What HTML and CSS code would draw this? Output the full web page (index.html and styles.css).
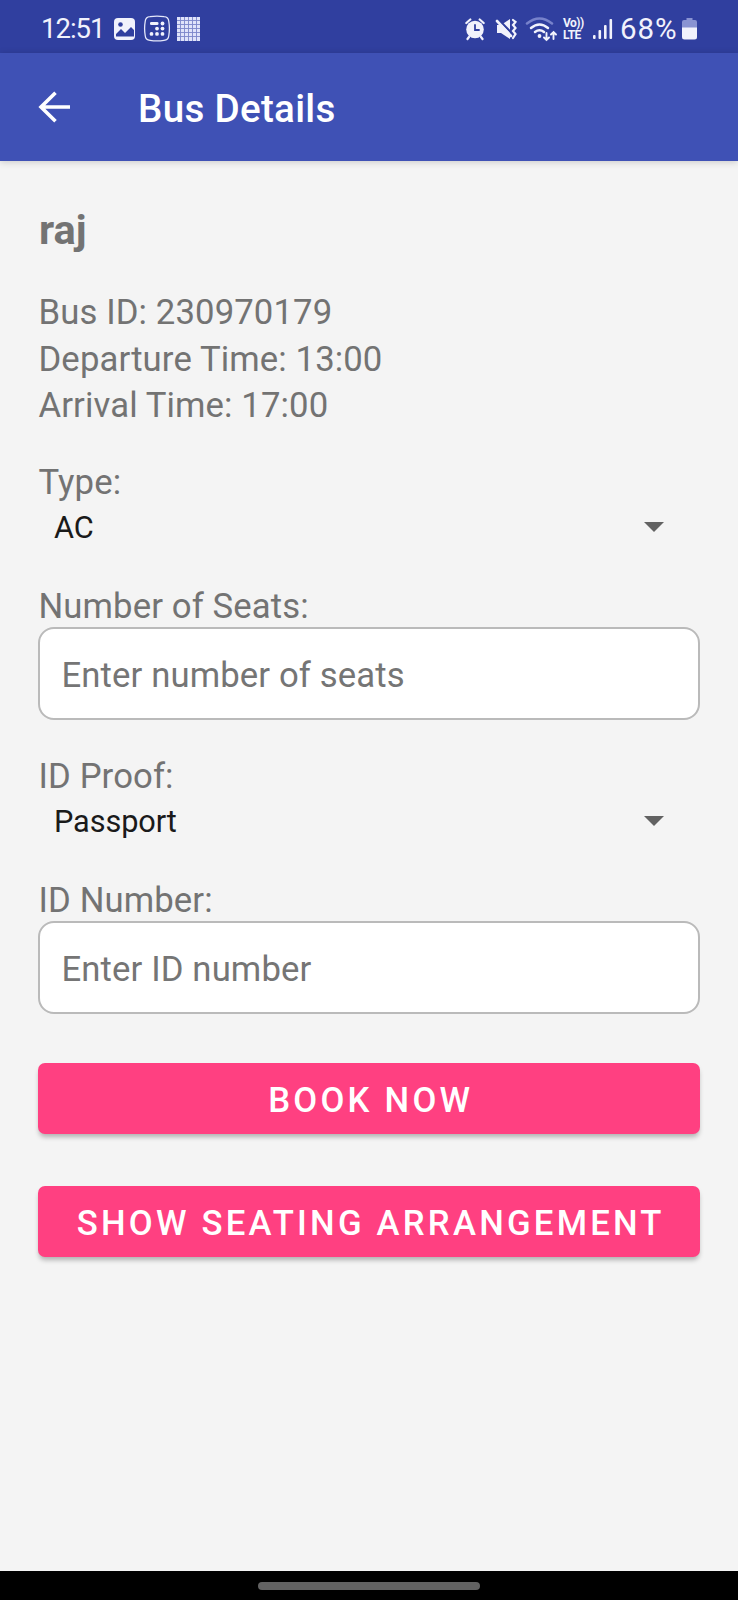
FILE: index.html
```html
<!DOCTYPE html>
<html lang="en">
<head>
<meta charset="utf-8">
<title>Bus Details</title>
<link rel="stylesheet" href="styles.css">
</head>
<body>
<div class="screen">
  <div class="status">
    <span class="clock">12:51</span>
    <svg class="notif" width="88" height="28" viewBox="0 0 88 28" fill="none">
      <rect x="1" y="3" width="21" height="22" rx="4" fill="#f1f2fc"/>
      <circle cx="7.500" cy="9.500" r="2.300" fill="#303f9f"/>
      <path d="M3 21.500V19l5-5 4 4 6-6 3 3v6.500z" fill="#303f9f"/>
      <path d="M37 1.700q7-1.200 14 0 4.500.3 4.800 4.800 1.200 7 0 14-.3 4.500-4.800 4.800-7 1.200-14 0-4.500-.3-4.800-4.800-1.200-7 0-14 .3-4.500 4.800-4.800z" stroke="#e4e7fa" stroke-width="1.300"/>
      <g fill="#f1f2fc"><rect x="37" y="7" width="8.500" height="3" rx="1.300"/><circle cx="49.500" cy="8.500" r="1.900"/><circle cx="44" cy="13.600" r="1.900"/><circle cx="49.500" cy="13.600" r="1.900"/><circle cx="38.500" cy="18.900" r="1.900"/><circle cx="44" cy="18.900" r="1.900"/><circle cx="49.500" cy="18.900" r="1.900"/></g>
      <rect x="64" y="2" width="23" height="24" fill="#dfe3fa"/>
      <path d="M67.500 2v24M71.500 2v24M75.500 2v24M79.500 2v24M83.500 2v24M64 5.500h23M64 9.500h23M64 13.500h23M64 17.500h23M64 21.500h23" stroke="#7a86c9" stroke-width=".9"/>
    </svg>
    <span class="spacer"></span>
    <svg class="sys" width="92" height="28" viewBox="0 0 92 28" fill="none" stroke="#f1f2fc" stroke-linecap="round">
      <circle cx="10" cy="14.500" r="8.800" fill="#f1f2fc" stroke="none"/>
      <path d="M1.300 8l4-3.500M18.700 8l-4-3.500M4 22l-1.500 2M16 22l1.500 2" stroke-width="2.200"/>
      <path d="M10 10v5h4" stroke="#303f9f" stroke-width="1.800"/>
      <path d="M32 10h4l9-6v20l-9-6h-4z" fill="#f1f2fc" stroke="none"/>
      <path d="M33.500 4.500l13.500 14" stroke="#303f9f" stroke-width="2.200"/>
      <path d="M32 6l14 15" stroke-width="2.600"/>
      <path d="M48 5l2.500 2-2.500 3 2.500 3-2.500 3 2.500 3-2.500 4" stroke-width="2.200"/>
      <path d="M62 8.500q12.500-10 25 0" stroke="#7782cb" stroke-width="2.500"/>
      <path d="M66 13q8.500-7 17 0M70 17q4.500-3.500 9 0" stroke-width="2.500"/>
      <circle cx="74.500" cy="21" r="1.900" fill="#f1f2fc" stroke="none"/>
      <path d="M81.500 18v7m-2.500-2.500 2.500 2.500 2.500-2.500M88.500 24v-7m-2.500 2.500 2.500-2.500 2.500 2.500" stroke-width="1.900"/>
    </svg>
    <span class="volte"><span>Vo))</span><span>LTE</span></span>
    <svg class="signal" width="20" height="22" viewBox="0 0 20 22" fill="#f1f2fc"><rect x="0" y="17" width="2.600" height="4" rx="1"/><rect x="5.500" y="12" width="2.600" height="9" rx="1"/><rect x="11" y="7" width="2.600" height="14" rx="1"/><rect x="16.500" y="1" width="2.600" height="20" rx="1"/></svg>
    <span class="percent">68%</span>
    <svg class="battery" width="15" height="22" viewBox="0 0 15 22"><path d="M4.500 0h6v2H13q2 0 2 2v6H0V4q0-2 2-2h2.500z" fill="#8993d2"/><path d="M0 9.500h15V19q0 2.500-2.500 2.500h-10Q0 21.500 0 19z" fill="#f1f2fc"/></svg>
  </div>
  <header class="appbar">
    <svg class="back" width="32" height="32" viewBox="0 0 32 32" fill="none" stroke="#fff" stroke-width="3.600"><path d="M32 16H3M17.500 1.700L3 16l14.500 14.300"/></svg>
    <h1 class="title">Bus Details</h1>
  </header>
  <main class="content">
    <h2 class="name">raj</h2>
    <div class="info">
      <div class="line">Bus ID: 230970179</div>
      <div class="line">Departure Time: 13:00</div>
      <div class="line">Arrival Time: 17:00</div>
    </div>
    <div class="group choice">
      <div class="line">Type:</div>
      <div class="spinner"><span>AC</span><svg width="20" height="10" viewBox="0 0 20 10"><path d="M0 0h20L10 10z" fill="#626262"/></svg></div>
    </div>
    <div class="group entry">
      <div class="line">Number of Seats:</div>
      <div class="field">Enter number of seats</div>
    </div>
    <div class="group choice">
      <div class="line">ID Proof:</div>
      <div class="spinner"><span>Passport</span><svg width="20" height="10" viewBox="0 0 20 10"><path d="M0 0h20L10 10z" fill="#626262"/></svg></div>
    </div>
    <div class="group entry">
      <div class="line">ID Number:</div>
      <div class="field">Enter ID number</div>
    </div>
    <div class="button first">BOOK NOW</div>
    <div class="button">SHOW SEATING ARRANGEMENT</div>
  </main>
  <div class="nav"><div class="pill"></div></div>
</div>
</body>
</html>
```
FILE: styles.css
```css
* { box-sizing: border-box; }
body { margin: 0; font-family: Roboto, "Liberation Sans", sans-serif; background: #f4f4f4; }
.screen { width: 738px; height: 1600px; display: flex; flex-direction: column; background: #f4f4f4; overflow: hidden; }
.status { height: 53px; flex: none; background: #303f9f; color: #f1f2fc; display: flex; align-items: center; padding: 5px 41px 0 41px; }
.clock { width: 72px; font-size: 27.500px; letter-spacing: -1px; line-height: 32px; white-space: nowrap; }
.notif, .sys, .signal, .battery { flex: none; }
.spacer { flex: 1; }
.volte { width: 22px; margin-left: 6px; display: flex; flex-direction: column; font-size: 12px; font-weight: 700; line-height: 12px; letter-spacing: -0.500px; }
.volte span { height: 12px; white-space: nowrap; }
.signal { margin-left: 8px; }
.percent { margin-left: 7px; width: 60px; font-size: 29.500px; line-height: 32px; letter-spacing: 0.900px; white-space: nowrap; }
.battery { margin-left: 2px; }
.appbar { height: 108px; flex: none; background: #3f51b5; color: #fff; display: flex; align-items: center; padding-left: 38px; box-shadow: 0 1px 7px rgba(0,0,0,.18); }
.title { margin: 0 0 0 68px; font-size: 38.600px; font-weight: 500; letter-spacing: 0.300px; line-height: 46px; padding-top: 3px; }
.content { flex: 1; padding: 38px 38px 0; color: #737373; font-size: 34.700px; }
.name { margin: 0 0 30px; padding-left: 1px; height: 59px; font-size: 41.500px; font-weight: 700; line-height: 61px; }
.line { height: 46.500px; line-height: 48.500px; padding-left: 0.500px; letter-spacing: 0.110px; white-space: nowrap; }
.group { margin-top: 30px; }
.choice { height: 94px; }
.entry { height: 140px; }
.field { height: 93px; margin-top: -1px; border: 2px solid #bababa; border-radius: 16px; background: #fff; padding: 2px 21.500px 0; line-height: 88.500px; letter-spacing: 0.120px; color: #757575; white-space: nowrap; }
.spinner { height: 46px; display: flex; align-items: center; justify-content: space-between; padding: 0 36px 0 16px; font-size: 30.700px; line-height: 49px; letter-spacing: -0.100px; color: #1a1a1a; }
.button { height: 71px; margin-top: 52px; background: #ff4081; border-radius: 7px; color: #fff; font-size: 34.700px; font-weight: 500; letter-spacing: 3.220px; line-height: 74px; text-align: center; text-indent: 3.500px; white-space: nowrap; box-shadow: 0 4px 5px -1px rgba(0,0,0,.28); }
.button.first { margin-top: 47.500px; }
.nav { height: 29px; flex: none; background: #000; display: flex; justify-content: center; padding-top: 11px; }
.pill { width: 222px; height: 8px; border-radius: 4px; background: #626262; }
```
